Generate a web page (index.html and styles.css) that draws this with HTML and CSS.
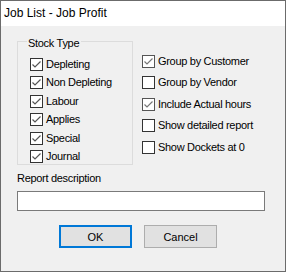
FILE: index.html
```html
<!DOCTYPE html>
<html lang="en">
<head>
    <meta charset="UTF-8">
    <title>Job List - Job Profit</title>
    <link rel="stylesheet" href="styles.css">
</head>
<body>
    <div class="window">
        <div class="titlebar">Job List - Job Profit</div>
        <div class="content">
            <div class="top">
                <div class="group">
                    <div class="legend">Stock Type</div>
                    <div class="list list-left">
                        <label class="option"><span class="box"><svg width="11" height="11" viewBox="0 0 11 11"><path d="M1.5 5.5 L4 8 L9.5 2.5" /></svg></span>Depleting</label>
                        <label class="option"><span class="box"><svg width="11" height="11" viewBox="0 0 11 11"><path d="M1.5 5.5 L4 8 L9.5 2.5" /></svg></span>Non Depleting</label>
                        <label class="option"><span class="box"><svg width="11" height="11" viewBox="0 0 11 11"><path d="M1.5 5.5 L4 8 L9.5 2.5" /></svg></span>Labour</label>
                        <label class="option"><span class="box"><svg width="11" height="11" viewBox="0 0 11 11"><path d="M1.5 5.5 L4 8 L9.5 2.5" /></svg></span>Applies</label>
                        <label class="option"><span class="box"><svg width="11" height="11" viewBox="0 0 11 11"><path d="M1.5 5.5 L4 8 L9.5 2.5" /></svg></span>Special</label>
                        <label class="option"><span class="box"><svg width="11" height="11" viewBox="0 0 11 11"><path d="M1.5 5.5 L4 8 L9.5 2.5" /></svg></span>Journal</label>
                    </div>
                </div>
                <div class="list list-right">
                    <label class="option"><span class="box soft"><svg width="11" height="11" viewBox="0 0 11 11"><path d="M1.5 5.5 L4 8 L9.5 2.5" /></svg></span>Group by Customer</label>
                    <label class="option"><span class="box"></span>Group by Vendor</label>
                    <label class="option"><span class="box soft"><svg width="11" height="11" viewBox="0 0 11 11"><path d="M1.5 5.5 L4 8 L9.5 2.5" /></svg></span>Include Actual hours</label>
                    <label class="option"><span class="box"></span>Show detailed report</label>
                    <label class="option"><span class="box"></span>Show Dockets at 0</label>
                </div>
            </div>

            <div class="field-label">Report description</div>
            <div class="textbox"></div>

            <div class="buttons">
                <div class="btn btn-default">OK</div>
                <div class="btn">Cancel</div>
            </div>
        </div>
    </div>
</body>
</html>
```

FILE: styles.css
```css
* {
    margin: 0;
    padding: 0;
    box-sizing: border-box;
}

body {
    background: #ffffff;
    font-family: 'Liberation Sans', Arial, sans-serif;
    color: #000;
}

.window {
    width: 286px;
    height: 272px;
    border: 1px solid #6b6b6b;
    display: flex;
    flex-direction: column;
}

.titlebar {
    height: 25px;
    line-height: 25px;
    background: #fff;
    font-size: 12px;
    padding-left: 3px;
}

.content {
    flex: 1;
    background: #f0f0f0;
    padding: 15px 0 0 16px;
    font-size: 11px;
    letter-spacing: -0.3px;
}

.top {
    display: flex;
}

.group {
    width: 116px;
    height: 124px;
    border: 1px solid #dcdcdc;
}

.legend {
    width: fit-content;
    margin: -5px 0 0 9px;
    padding: 0 2px 0 1px;
    background: #f0f0f0;
    line-height: 13px;
}

.list {
    display: flex;
    flex-direction: column;
}

.list-left {
    margin-top: 8px;
    padding-left: 12px;
    gap: 5.4px;
}

.list-right {
    margin-left: 9px;
    padding-top: 14px;
    gap: 8.4px;
}

.option {
    display: flex;
    align-items: center;
    height: 13px;
    line-height: 13px;
    white-space: nowrap;
}

.box {
    width: 13px;
    height: 13px;
    border: 1px solid #333;
    background: #fff;
    margin-right: 3px;
    flex-shrink: 0;
}

.box svg {
    display: block;
}

.box path {
    fill: none;
    stroke: #555;
    stroke-width: 1.2;
}

.box.soft {
    border-color: #555;
}

.box.soft path {
    stroke: #777;
}

.field-label {
    margin-top: 7px;
    line-height: 13px;
}

.textbox {
    margin-top: 6px;
    width: 248px;
    height: 20px;
    border: 1px solid #7a7a7a;
    background: #fff;
}

.buttons {
    display: flex;
    gap: 12px;
    margin-top: 14px;
    padding-left: 42px;
}

.btn {
    width: 73px;
    height: 23px;
    border: 1px solid #adadad;
    background: #e1e1e1;
    display: flex;
    align-items: center;
    justify-content: center;
    font-size: 11px;
    letter-spacing: 0;
}

.btn-default {
    border: 2px solid #0078d7;
}
```
